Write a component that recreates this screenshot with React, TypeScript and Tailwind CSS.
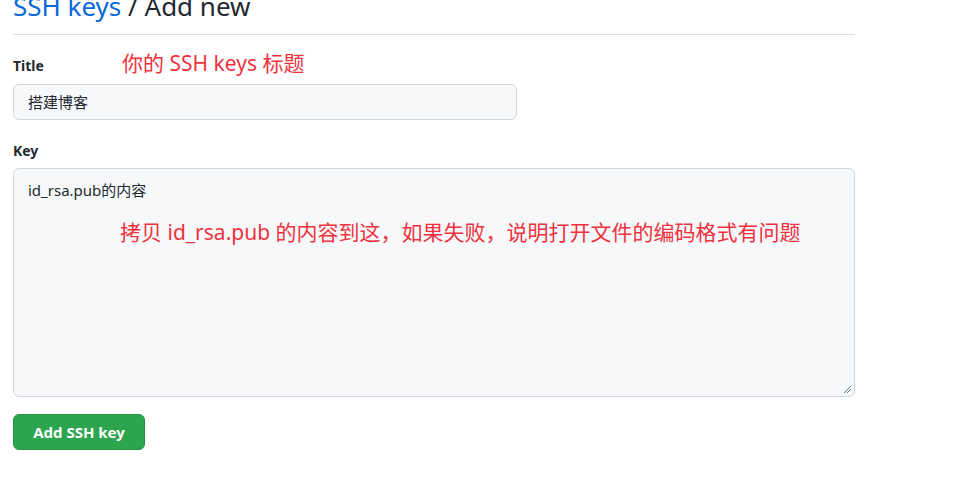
export default function App() {
  const font = { fontFamily: '"Noto Sans", "Noto Sans CJK SC", sans-serif' };
  return (
    <div className="w-[956px] h-[490px] bg-white overflow-hidden" style={font}>
      <div className="ml-[13px] w-[842px]">
        <div className="border-b border-[#d8dee4] h-[35px] flex items-end">
          <h1 className="text-[26px] leading-[36px] mb-[10px] text-[#24292f] font-normal whitespace-nowrap">
            <span className="text-[#0969da]">SSH keys</span> / Add new
          </h1>
        </div>
        <div className="mt-[19px] flex items-center h-[22px]">
          <span className="w-[109px] text-[14px] font-bold text-[#24292f]">Title</span>
          <span className="text-[21px] text-[#f0323d] -mt-[3px]">你的 SSH keys 标题</span>
        </div>
        <div className="mt-[8px] w-[504px] h-[36px] bg-[#f6f8fa] border border-[#d0d7de] rounded-[6px] flex items-center px-[14px] text-[15px] text-[#24292f]">
          搭建博客
        </div>
        <div className="mt-[19px] text-[14px] font-bold text-[#24292f] h-[22px] flex items-center">Key</div>
        <div className="relative mt-[7px] h-[229px] bg-[#f6f8fa] border border-[#d0d7de] rounded-[6px] pl-[14px] pt-[10px] text-[15px] text-[#24292f]">
          <div>id_rsa.pub的内容</div>
          <div className="mt-[15px] ml-[92px] text-[21px] text-[#f0323d] whitespace-nowrap">
            拷贝 id_rsa.pub 的内容到这，如果失败，说明打开文件的编码格式有问题
          </div>
          <svg className="absolute right-[2px] bottom-[2px]" width="9" height="9" viewBox="0 0 9 9">
            <line x1="8" y1="1" x2="1" y2="8" stroke="#6e7781" strokeWidth="1" />
            <line x1="8" y1="4" x2="4" y2="8" stroke="#6e7781" strokeWidth="1" />
          </svg>
        </div>
        <button className="mt-[17px] w-[132px] h-[36px] bg-[#2da44e] border border-[#2a9147] rounded-[6px] text-white text-[15px] font-bold">
          Add SSH key
        </button>
      </div>
    </div>
  );
}
